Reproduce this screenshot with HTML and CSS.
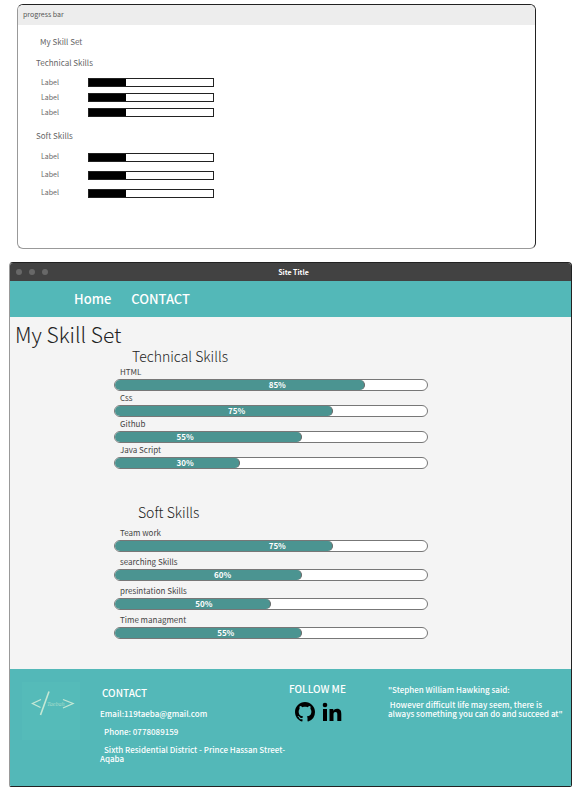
FILE: index.html
```html
<!DOCTYPE html>
<html lang="en">
<head>
<meta charset="utf-8">
<meta name="viewport" content="width=device-width, initial-scale=1">
<title>My Skill Set</title>
<link rel="stylesheet" href="styles.css">
</head>
<body>
<section class="wire">
  <header class="wire-head">progress bar</header>
  <div class="wire-body">
    <h2 class="wire-title">My Skill Set</h2>
    <h3 class="wire-sub">Technical Skills</h3>
    <ul class="wire-list">
      <li><span>Label</span><i class="wire-bar"></i></li>
      <li><span>Label</span><i class="wire-bar"></i></li>
      <li><span>Label</span><i class="wire-bar"></i></li>
    </ul>
    <h3 class="wire-sub">Soft Skills</h3>
    <ul class="wire-list wire-list-loose">
      <li><span>Label</span><i class="wire-bar"></i></li>
      <li><span>Label</span><i class="wire-bar"></i></li>
      <li><span>Label</span><i class="wire-bar"></i></li>
    </ul>
  </div>
</section>

<div class="site">
  <div class="titlebar">
    <span class="dots"><i></i><i></i><i></i></span>
    <span class="site-title">Site Title</span>
  </div>
  <nav class="nav">
    <a href="#home">Home</a>
    <a href="#contact">CONTACT</a>
  </nav>
  <main class="main" id="home">
    <h1>My Skill Set</h1>
    <section class="skills">
      <h2>Technical Skills</h2>
      <ul>
        <li><span class="name">HTML</span><div class="bar"><div class="fill" style="width:80%"></div><b style="left:52%">85%</b></div></li>
        <li><span class="name">Css</span><div class="bar"><div class="fill" style="width:70%"></div><b style="left:39%">75%</b></div></li>
        <li><span class="name">Github</span><div class="bar"><div class="fill" style="width:60%"></div><b style="left:22.5%">55%</b></div></li>
        <li><span class="name">Java Script</span><div class="bar"><div class="fill" style="width:40%"></div><b style="left:22.5%">30%</b></div></li>
      </ul>
    </section>
    <section class="skills skills-loose">
      <h2>Soft Skills</h2>
      <ul>
        <li><span class="name">Team work</span><div class="bar"><div class="fill" style="width:70%"></div><b style="left:52%">75%</b></div></li>
        <li><span class="name">searching Skills</span><div class="bar"><div class="fill" style="width:60%"></div><b style="left:34.5%">60%</b></div></li>
        <li><span class="name">presintation Skills</span><div class="bar"><div class="fill" style="width:50%"></div><b style="left:28.5%">50%</b></div></li>
        <li><span class="name">Time managment</span><div class="bar"><div class="fill" style="width:60%"></div><b style="left:35.5%">55%</b></div></li>
      </ul>
    </section>
  </main>
  <footer class="footer" id="contact">
    <div class="logo">
      <svg viewBox="0 0 58 58" role="img" aria-label="Taeba code logo">
        <g fill="none" stroke="#c5e8d5">
          <path d="M19 17.500 10.500 21.500 18.500 25.500M41 17.500l10 4-10 4.500" stroke-width="1.300"/>
          <path d="M27 9.500 18.500 33" stroke-width="1.600"/>
        </g>
        <text x="25" y="24">Taebah</text>
      </svg>
    </div>
    <address class="contact">
      <h2>CONTACT</h2>
      <p>Email:119taeba@gmail.com</p>
      <p class="indent">Phone: 0778089159</p>
      <p class="indent">Sixth Residential District - Prince Hassan Street-Aqaba</p>
    </address>
    <div class="follow">
      <h2>FOLLOW ME</h2>
      <div class="social">
        <a href="#github" aria-label="GitHub"><svg viewBox="0 0 16 16"><path d="M8 0C3.580 0 0 3.580 0 8c0 3.540 2.290 6.530 5.470 7.590.4.070.55-.17.55-.38 0-.19-.01-.82-.01-1.490-2.010.37-2.530-.49-2.690-.94-.09-.23-.48-.94-.82-1.130-.28-.15-.68-.52-.01-.53.63-.01 1.080.58 1.230.82.72 1.210 1.870.87 2.330.66.070-.52.28-.87.51-1.070-1.780-.2-3.640-.89-3.640-3.950 0-.87.31-1.590.82-2.150-.08-.2-.36-1.020.08-2.120 0 0 .67-.21 2.200.82.64-.18 1.320-.27 2-.27s1.360.09 2 .27c1.530-1.040 2.200-.82 2.200-.82.44 1.100.16 1.920.08 2.120.51.56.82 1.270.82 2.150 0 3.070-1.870 3.750-3.650 3.950.29.25.54.73.54 1.480 0 1.070-.01 1.930-.01 2.200 0 .21.15.46.55.38A8.010 8.010 0 0 0 16 8c0-4.420-3.580-8-8-8z"/></svg></a>
        <a href="#linkedin" aria-label="LinkedIn"><svg viewBox="0 0 20 20"><circle cx="3" cy="3" r="2.300"/><path d="M1 7h4v12H1zM7.500 7h3.800v1.700C12 7.500 13.300 6.700 15 6.700c3.600 0 4.300 2.300 4.300 5.400V19h-4v-6.100c0-1.500 0-2.900-1.800-2.900s-2 1.400-2 2.800V19h-4z"/></svg></a>
      </div>
    </div>
    <blockquote class="quote">
      <p>"Stephen William Hawking said:</p>
      <p>&nbsp;However difficult life may seem, there is always something you can do and succeed at"</p>
    </blockquote>
  </footer>
</div>
</body>
</html>
```
FILE: styles.css
```css
* { box-sizing: border-box; }

body {
  margin: 0;
  padding: 4px 1px 16px 9px;
  background: #fff;
  color: #444;
  font-family: "Noto Sans CJK SC", "Noto Sans", sans-serif;
}

h1, h2, h3, p, ul, blockquote { margin: 0; padding: 0; font-weight: 400; }
ul { list-style: none; }
a { color: inherit; text-decoration: none; }

/* Wireframe panel */
.wire {
  margin: 0 36px 13px 8px;
  min-height: 245px;
  border: 1px solid #222;
  border-left-color: #999;
  border-bottom-color: #999;
  border-radius: 6px;
  overflow: hidden;
  color: #666;
}
.wire-head {
  height: 20px;
  padding-left: 5px;
  background: #ededed;
  font-size: 7px;
  line-height: 19px;
  color: #555;
}
.wire-body { padding: 10px 18px; }
.wire-title { padding-left: 4px; font-size: 8px; line-height: 14px; }
.wire-sub { margin-top: 8px; font-size: 8px; line-height: 12px; }
.wire-list { padding: 6px 0 2px 5px; }
.wire-list li {
  display: grid;
  grid-template-columns: 47px 126px;
  align-items: center;
  height: 15px;
  font-size: 7px;
  line-height: 10px;
}
.wire-list li span { padding-bottom: 2px; }
.wire-list-loose li { height: 18px; }
.wire-bar {
  height: 9px;
  border: 1px solid #222;
  background: linear-gradient(#000, #000) no-repeat 0 0 / 30% 100%;
}

/* Browser frame */
.site {
  border: 1px solid #222;
  border-left-color: #999;
  border-radius: 4px 4px 2px 2px;
  overflow: hidden;
  background: #f4f4f4;
}
.titlebar {
  display: grid;
  grid-template-columns: 1fr auto 1fr;
  align-items: center;
  height: 18px;
  padding-left: 6px;
  background: #424242;
}
.dots { display: flex; gap: 7px; }
.dots i { width: 6px; height: 6px; border-radius: 50%; background: #686868; }
.site-title { color: #fff; font-size: 7px; font-weight: 700; line-height: 16px; }
.nav {
  display: flex;
  align-items: center;
  gap: 20px;
  height: 36px;
  padding-left: 64px;
  background: #53b8b8;
  color: #fff;
  font-size: 13px;
  font-weight: 500;
  line-height: 20px;
}
.main { padding: 4px 5px 27px; }
.main h1 { color: #222; font-size: 21px; font-weight: 300; line-height: 26px; }

.skills { max-width: 413px; padding-left: 99px; }
.skills h2 { padding-left: 18px; color: #222; font-size: 14px; line-height: 18px; font-weight: 300; }
.skills li { height: 26px; }
.skills-loose { margin-top: 34px; }
.skills-loose h2 { padding: 0 0 5px 24px; }
.skills-loose li { height: 29px; }
.name { display: block; padding-left: 6px; font-size: 8px; line-height: 14px; }
.bar {
  position: relative;
  height: 12px;
  border: 1px solid #777;
  border-radius: 6px;
  background: #fff;
}
.fill {
  height: 10px;
  border-right: 1px solid #666;
  border-radius: 5px;
  background: #4b9491;
}
.bar b {
  position: absolute;
  top: 0;
  transform: translateX(-50%);
  color: #fff;
  font-size: 8px;
  line-height: 10px;
}

/* Footer */
.footer {
  display: grid;
  grid-template-columns: 78px 189px 99px 1fr;
  min-height: 117px;
  padding: 13px 4px 13px 12px;
  background: #53b8b8;
  color: #fff;
  font-size: 8px;
  font-weight: 500;
  line-height: 9px;
}
.footer h2 { font-size: 10px; font-weight: 500; line-height: 14px; }
.footer p { font-weight: 500; }
.logo svg { display: block; width: 58px; height: 58px; background: #55bbb9; }
.logo text { fill: #a5dccb; font: italic 6px "Liberation Serif", serif; }
.contact { padding-top: 4px; font-style: normal; }
.contact h2 { padding-left: 2px; }
.contact p { margin-top: 9px; }
.contact .indent { text-indent: 4px; }
.social { display: flex; gap: 7px; padding: 6px 0 0 6px; }
.social svg { display: block; width: 20px; height: 20px; fill: #000; }
.quote { padding-top: 3px; }
.quote p + p { margin-top: 6px; }
```
